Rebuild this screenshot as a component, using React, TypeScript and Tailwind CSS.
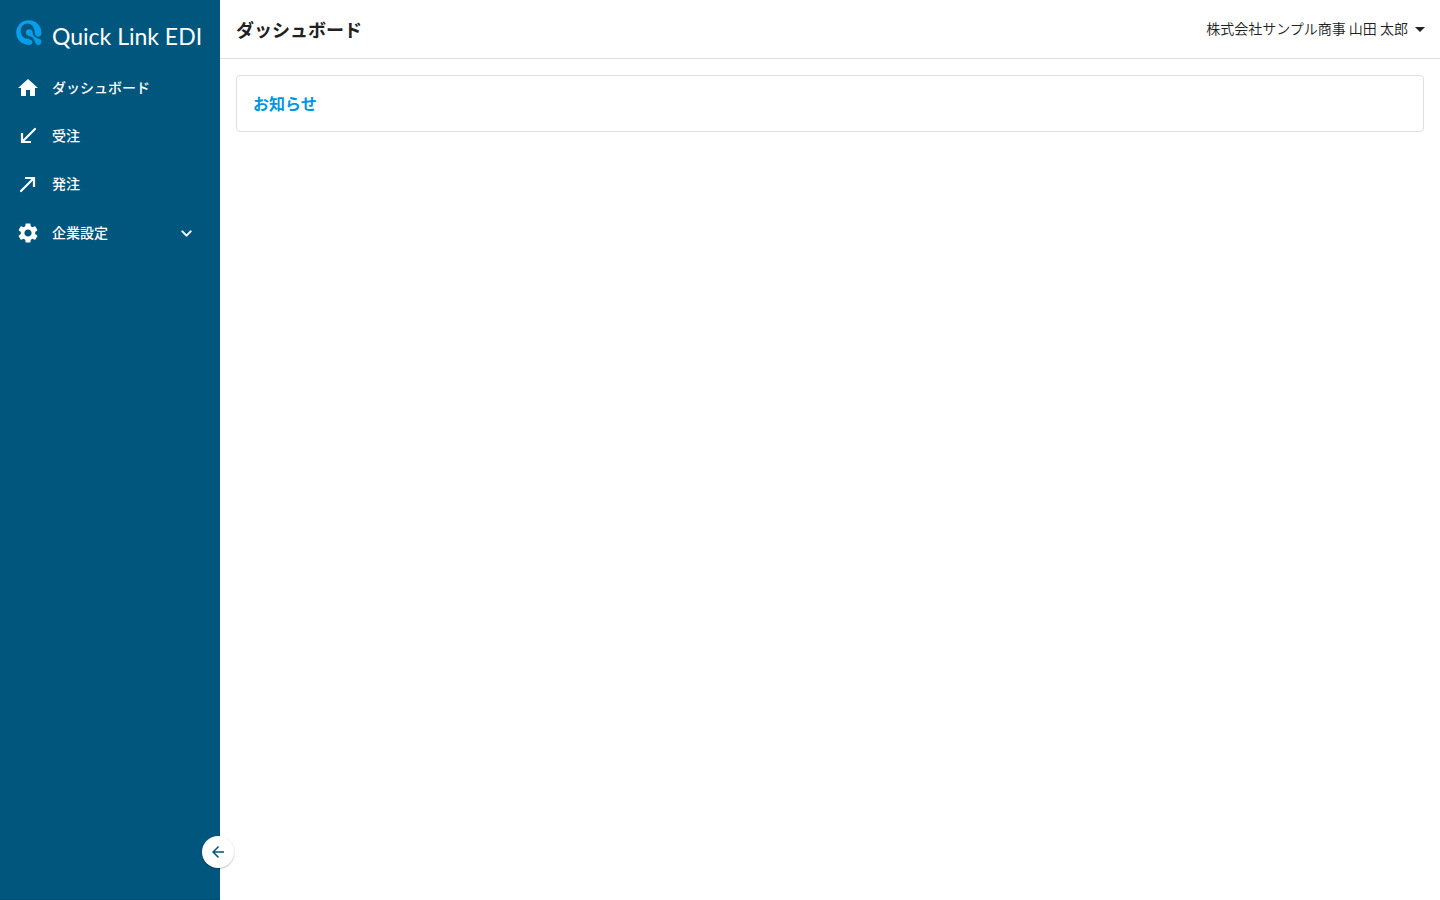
import { MdArrowBack, MdArrowDropDown, MdHome, MdSettings } from 'react-icons/md';

const NAV_LINKS = [
  { label: 'ダッシュボード', href: '#dashboard', icon: MdHome },
  { label: '受注', href: '#orders-received', icon: ArrowInIcon },
  { label: '発注', href: '#orders-placed', icon: ArrowOutIcon },
];

function ArrowInIcon({ className }: { className?: string }) {
  return (
    <svg viewBox="0 0 24 24" className={className} fill="none" stroke="currentColor" strokeWidth="2.2" aria-hidden="true">
      <path d="M6 9v9h9" />
      <path d="M6.5 17.5L19 5" strokeLinecap="round" />
    </svg>
  );
}

function ArrowOutIcon({ className }: { className?: string }) {
  return (
    <svg viewBox="0 0 24 24" className={className} fill="none" stroke="currentColor" strokeWidth="2.2" aria-hidden="true">
      <path d="M9 6h9v9" />
      <path d="M17.5 6.5L5 19" strokeLinecap="round" />
    </svg>
  );
}

function ChevronDownIcon({ className }: { className?: string }) {
  return (
    <svg viewBox="0 0 20 20" className={className} fill="none" stroke="currentColor" strokeWidth="2" aria-hidden="true">
      <path d="M6.3 8.4L10.5 12.6L14.7 8.4" strokeLinecap="round" strokeLinejoin="round" />
    </svg>
  );
}

function LogoMark() {
  return (
    <svg viewBox="0 0 26 26" className="h-[26px] w-[26px] shrink-0" aria-hidden="true">
      <defs>
        <linearGradient id="mark" gradientUnits="userSpaceOnUse" x1="2" y1="2" x2="24" y2="24">
          <stop offset="0" stopColor="#0aa2ee" />
          <stop offset="1" stopColor="#009be8" />
        </linearGradient>
      </defs>
      <g fill="url(#mark)">
        <path d="M12.7 0.2C19.8 0.2 25.4 5.6 25.4 12.4C25.4 15 24.2 16.8 22.3 16.8C20.4 16.8 19.2 15.3 18.9 13C18.3 7.2 15.8 3.6 11.6 3.6C7.6 3.6 4.7 7 4.7 11C4.7 15.2 7.6 18.4 11.4 18.8C14.6 19.2 16.4 20.3 16.4 22.2C16.4 24.1 14.9 24.9 12.6 24.9C5.6 24.9 0.2 19.5 0.2 12.6C0.2 5.6 5.7 0.2 12.7 0.2Z" />
        <circle cx="13.2" cy="12.6" r="3.3" />
        <circle cx="22.3" cy="21.8" r="3.1" />
        <path d="M16.3 11.6C16.4 15 18.4 17.4 22.8 18.8L19.2 22.6C18.2 18.6 16.2 16.4 12.4 15.8Z" />
      </g>
    </svg>
  );
}

function Sidebar() {
  return (
    <aside className="relative w-[220px] shrink-0 bg-[#00567d] text-white shadow-[inset_0_-1px_#004b72]">
      <a href="#top" className="flex h-16 items-center gap-2.5 px-4 pt-0.5">
        <LogoMark />
        <span className="pt-1.5 font-[Lato,sans-serif] text-[23px] leading-7 font-normal whitespace-nowrap">
          Quick Link EDI
        </span>
      </a>
      <nav className="text-sm font-medium">
        {NAV_LINKS.map(({ label, href, icon: Icon }) => (
          <a key={label} href={href} className="flex h-12 items-center gap-3 px-4 hover:bg-white/10">
            <Icon className="h-6 w-6" />
            <span className="pb-0.5">{label}</span>
          </a>
        ))}
        <button type="button" className="flex h-[50px] w-full items-center gap-3 px-4 hover:bg-white/10">
          <MdSettings className="h-6 w-6" />
          <span className="pb-0.5">企業設定</span>
          <ChevronDownIcon className="mr-2 ml-auto h-5 w-5" />
        </button>
      </nav>
      <button
        type="button"
        aria-label="メニューを閉じる"
        className="absolute -right-3.5 bottom-8 flex h-8 w-8 items-center justify-center rounded-full bg-white text-[#00567d] shadow-[0_1px_2px_rgba(0,0,0,0.25)]"
      >
        <MdArrowBack className="h-[18px] w-[18px]" />
      </button>
    </aside>
  );
}

export default function App() {
  return (
    <div className="flex min-h-screen bg-white font-['Noto_Sans_CJK_JP',sans-serif] text-[#212121]">
      <Sidebar />
      <div className="min-w-0 flex-1">
        <header className="flex items-center justify-between border-b border-[#e0e0e0] pr-2 pl-4">
          <h1 className="py-4 text-lg leading-[26px] font-bold">ダッシュボード</h1>
          <button type="button" className="flex items-center text-sm font-[350]">
            <span className="pb-0.5">株式会社サンプル商事 山田 太郎</span>
            <MdArrowDropDown className="h-6 w-6" />
          </button>
        </header>
        <main className="p-4">
          <section className="rounded border border-[#e0e0e0] p-4">
            <h2 className="text-base leading-[23px] font-bold text-[#0097e0]">お知らせ</h2>
          </section>
        </main>
      </div>
    </div>
  );
}
